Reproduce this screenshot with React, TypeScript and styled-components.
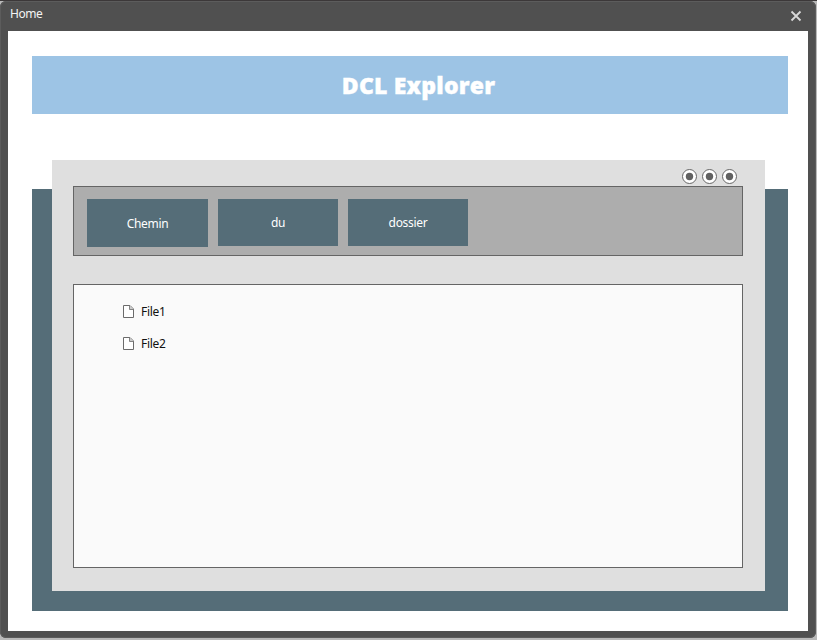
import React from "react";
import styled, { createGlobalStyle } from "styled-components";

const GlobalStyle = createGlobalStyle`
  * { box-sizing: border-box; }
  body {
    margin: 0;
    background: #b4b4b4;
    font-family: "Noto Sans", "Open Sans", sans-serif;
    font-size: 12px;
    overflow: hidden;
  }
`;

const Desktop = styled.div`
  width: 817px;
  height: 640px;
  padding: 1px 1px 2px 0;
  background: linear-gradient(#3c3839 0 1px, #b9b9b9 1px);
`;

const Frame = styled.main`
  height: 637px;
  padding: 0 8px 7px;
  border-radius: 6px;
  background: #505050;
  box-shadow: inset 0 0 0 1px #5c5c5c;
`;

const TitleBar = styled.header`
  display: flex;
  justify-content: space-between;
  height: 30px;
  padding: 5px 6px 0 2px;
  color: #f4f4f4;
  line-height: 16px;
`;

const WindowTitle = styled.span`
  letter-spacing: -0.45px;
`;

const CloseButton = styled.button`
  display: block;
  width: 12px;
  height: 12px;
  margin-top: 4px;
  padding: 0;
  border: 0;
  background: none;

  svg { display: block; }
`;

const Page = styled.div`
  height: 600px;
  padding: 25px 20px 20px 24px;
  background: #fff;
`;

const Banner = styled.h1`
  display: flex;
  align-items: center;
  justify-content: center;
  height: 58px;
  margin: 0 0 46px;
  padding: 0 0 0 17px;
  background: #9dc4e5;
  color: #fff;
  font-family: "Open Sans", "Noto Sans", sans-serif;
  font-size: 23px;
  font-weight: 800;
  letter-spacing: 0.2px;
  line-height: 32px;
  -webkit-text-stroke: 0.4px #fff;
`;

const Stage = styled.section`
  display: grid;
  height: 451px;
`;

const Backdrop = styled.div`
  grid-area: 1 / 1;
  margin-top: 29px;
  background: #556d78;
`;

const ExplorerWindow = styled.div`
  grid-area: 1 / 1;
  display: flex;
  flex-direction: column;
  margin: 0 23px 20px 20px;
  padding: 0 22px 23px 21px;
  background: #dfdfdf;
`;

const WindowControls = styled.div`
  display: flex;
  justify-content: flex-end;
  gap: 4px;
  height: 26px;
  padding: 8px 6px 0 0;

  svg { display: block; }
`;

const PathBar = styled.nav`
  display: flex;
  align-items: flex-start;
  gap: 10px;
  height: 70px;
  padding: 12px 13px;
  border: 1px solid #656565;
  background: #adadad;
`;

const PathSegment = styled.button<{ $root?: boolean }>`
  width: ${(p) => (p.$root ? 121 : 120)}px;
  height: ${(p) => (p.$root ? 48 : 47)}px;
  padding: ${(p) => (p.$root ? 1 : 0)}px 0 0;
  border: 0;
  background: #556d78;
  color: #fff;
  font: inherit;
  letter-spacing: -0.3px;
`;

const FileList = styled.ul`
  flex: 1;
  margin: 28px 0 0;
  padding: 10px 0 0 49px;
  border: 1px solid #656565;
  background: #fafafa;
  list-style: none;
`;

const FileRow = styled.li`
  display: flex;
  align-items: center;
  gap: 7px;
  height: 32px;
  color: #111;
  letter-spacing: -0.3px;
`;

const CloseIcon = () => (
  <svg width="12" height="12" viewBox="0 0 12 12">
    <path d="M1.5 1.5 10.5 10.5M10.5 1.5 1.5 10.5" stroke="#d8d8d8" strokeWidth="1.8" />
  </svg>
);

const RadioDot = () => (
  <svg width="16" height="16" viewBox="0 0 16 16">
    <circle cx="8.5" cy="8.5" r="7" fill="#fff" stroke="#666" />
    <circle cx="8.5" cy="8.5" r="3.7" fill="#606060" />
  </svg>
);

const FileIcon = () => (
  <svg width="11" height="13" viewBox="0 0 11 13">
    <path d="M.5 .5H7L10.5 4V12.5H.5Z" fill="#fff" stroke="#6b6b6b" />
    <path d="M6.5 .5V4.5H10.5" fill="#ccc" stroke="#777" strokeWidth=".9" />
  </svg>
);

const segments = ["Chemin", "du", "dossier"];
const files = ["File1", "File2"];

export default function App() {
  return (
    <Desktop>
      <GlobalStyle />
      <Frame>
        <TitleBar>
          <WindowTitle>Home</WindowTitle>
          <CloseButton aria-label="Close"><CloseIcon /></CloseButton>
        </TitleBar>
        <Page>
          <Banner>DCL Explorer</Banner>
          <Stage>
            <Backdrop />
            <ExplorerWindow>
              <WindowControls>
                <RadioDot />
                <RadioDot />
                <RadioDot />
              </WindowControls>
              <PathBar>
                {segments.map((name, i) => (
                  <PathSegment key={name} $root={i === 0}>{name}</PathSegment>
                ))}
              </PathBar>
              <FileList>
                {files.map((name) => (
                  <FileRow key={name}><FileIcon />{name}</FileRow>
                ))}
              </FileList>
            </ExplorerWindow>
          </Stage>
        </Page>
      </Frame>
    </Desktop>
  );
}
